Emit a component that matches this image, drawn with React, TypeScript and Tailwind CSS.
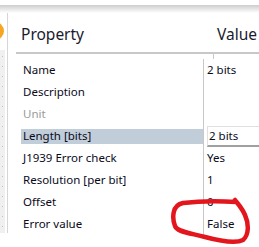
import React from 'react';

type Row = { name: string; value?: string; muted?: boolean; selected?: boolean };

const rows: Row[] = [
  { name: 'Name', value: '2 bits' },
  { name: 'Description' },
  { name: 'Unit', muted: true },
  { name: 'Length [bits]', value: '2 bits', selected: true },
  { name: 'J1939 Error check', value: 'Yes' },
  { name: 'Resolution [per bit]', value: '1' },
  { name: 'Offset', value: '0' },
  { name: 'Error value', value: 'False' },
];

const PropRow = ({ row }: { row: Row }) => (
  <div className="flex h-[22px] items-center">
    <div
      className={`flex h-[15px] w-[182px] items-center pl-[2px] ${
        row.selected ? 'bg-[#c1cdd9]' : ''
      } ${row.muted ? 'text-[#9a9a9a]' : 'text-[#0a0a1a]'}`}
    >
      {row.name}
    </div>
    <div className="h-full w-[1px] bg-[#c8c8c8]" />
    {row.selected ? (
      <div className="ml-[3px] flex h-[21px] flex-1 items-center border-b-2 border-l border-t border-b-[#a0a0a0] border-l-[#e0e0e0] border-t-[#e0e0e0] bg-white pl-[1px] text-[#0a0a1a]">
        {row.value}
      </div>
    ) : (
      <div className="flex-1 pl-[3px] text-[#0a0a1a]">{row.value}</div>
    )}
  </div>
);

export default function App() {
  return (
    <div className="relative h-[247px] w-[259px] overflow-hidden bg-white font-['Noto_Sans',sans-serif] text-[11.5px]">
      <div className="h-[5px]" />
      <div className="h-[8px] bg-gradient-to-b from-[#cdcdcd] to-white" />
      <div className="flex">
        {/* left gutter */}
        <div className="relative flex w-[5px] flex-col">
          <div className="h-[37px]" />
          <div className="flex h-[183px] flex-col items-center gap-[9px] bg-[#f0f0f0] pt-[6px]">
            {Array.from({ length: 18 }).map((_, i) => (
              <div key={i} className="h-[1px] w-[1px] bg-[#b8c4cc]" />
            ))}
          </div>
          <div className="absolute left-[-14px] top-[9px] h-[18px] w-[18px] rounded-full bg-[#f5a623]" />
        </div>
        <div className="ml-[2px] h-[220px] w-[1px] bg-[#d6d6d6]" />
        {/* grid */}
        <div className="flex-1 pl-[8px]">
          <div className="flex h-[39px] items-end pb-[6px] text-[15.5px] text-[#1a1a2e]">
            <div className="w-[201px] pl-[5px]">Property</div>
            <div>Value</div>
          </div>
          <div className="h-[2px] bg-[#c8c8c8]" />
          <div className="flex h-[5px]">
            <div className="w-[197px]" />
            <div className="w-[1px] bg-[#c8c8c8]" />
          </div>
          <div className="pl-[5px]">
            {rows.map((r) => (
              <PropRow key={r.name} row={r} />
            ))}
          </div>
        </div>
      </div>
      {/* hand-drawn annotation */}
      <svg className="absolute left-0 top-0" width="259" height="247" viewBox="0 0 259 247">
        <path
          d="M236 202 C220 201 200 201 183 203 C172 205 172 218 175 226 C177 232 190 233 205 237 C220 241 235 244 243 240 C249 235 249 224 245 215 C242 208 238 204 235 200"
          fill="none"
          stroke="#e3151d"
          strokeWidth="4.5"
          strokeLinecap="round"
        />
      </svg>
    </div>
  );
}
